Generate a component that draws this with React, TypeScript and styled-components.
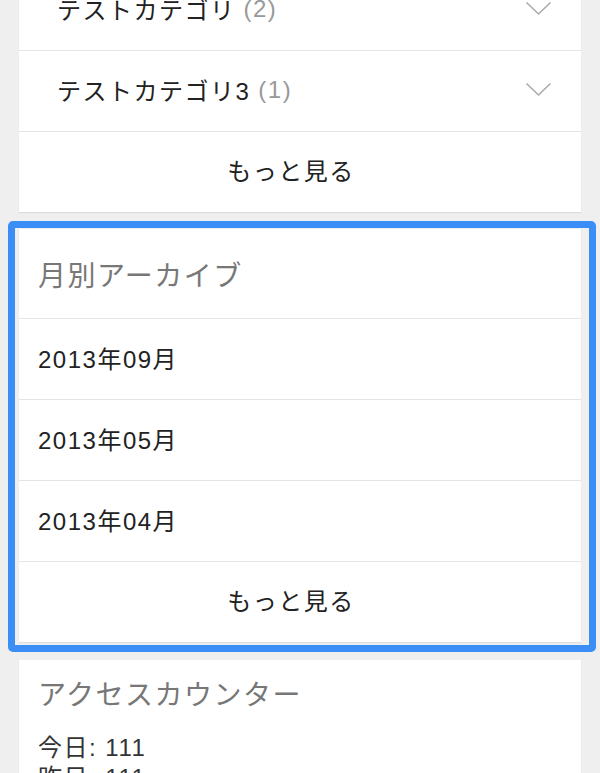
import React from "react";
import styled, { createGlobalStyle } from "styled-components";

const GlobalStyle = createGlobalStyle`
  html, body {
    margin: 0;
    overflow: hidden;
    background: #efefef;
    font-family: "Liberation Sans", "Noto Sans CJK JP", sans-serif;
  }
`;

const Page = styled.div`
  display: flex;
  flex-direction: column;
  padding: 0 19px;
  margin-top: -120px;
`;

const Card = styled.section`
  background: #fff;
  box-shadow: 0 1px 1px rgba(0, 0, 0, 0.08);
`;

const Highlight = styled.div`
  margin: 9px -15px 8px -11px;
  padding: 1px 8px 3px 4px;
  border: 7px solid #3a8ef6;
  border-radius: 5px;
`;

const CardTitle = styled.h2<{ $divided?: boolean }>`
  margin: 0;
  padding: ${(p) => (p.$divided ? "31px 19px 24px" : "19px 19px 20px")};
  font-size: 28px;
  line-height: 34px;
  font-weight: normal;
  letter-spacing: 1.5px;
  color: #777;
`;

const Row = styled.a<{ $indent?: boolean }>`
  display: flex;
  align-items: center;
  box-sizing: border-box;
  height: 81px;
  border-top: 1px solid #e4e4e4;
  padding: 0 29px 3px ${(p) => (p.$indent ? "38px" : "19px")};
  font-size: 24px;
  letter-spacing: 1.5px;
  color: #222;
  text-decoration: none;
`;

const MoreRow = styled(Row)`
  justify-content: center;
  padding: 0 18px 5px 0;
`;

const Count = styled.span`
  margin-left: 8px;
  color: #999;
`;

const Chevron = styled.svg`
  margin-left: auto;
  flex: none;
`;

const Counter = styled.div`
  padding: 0 19px 20px;
  font-size: 24px;
  line-height: 30px;
  letter-spacing: 1.5px;
  color: #333;
`;

const categories = [
  { name: "テストカテゴリ", count: 2 },
  { name: "テストカテゴリ3", count: 1 },
];

const months = ["2013年09月", "2013年05月", "2013年04月"];

function Down() {
  return (
    <Chevron width="27" height="15" viewBox="0 0 27 15">
      <polyline
        points="1.5,1.5 13.5,13 25.5,1.5"
        fill="none"
        stroke="#ababab"
        strokeWidth="1.6"
      />
    </Chevron>
  );
}

export default function App() {
  return (
    <>
      <GlobalStyle />
      <Page>
        <Card>
          <CardTitle $divided>カテゴリー</CardTitle>
          {categories.map((c) => (
            <Row key={c.name} $indent>
              {c.name}
              <Count>({c.count})</Count>
              <Down />
            </Row>
          ))}
          <MoreRow>もっと見る</MoreRow>
        </Card>
        <Highlight>
          <Card>
            <CardTitle $divided>月別アーカイブ</CardTitle>
            {months.map((m) => (
              <Row key={m}>{m}</Row>
            ))}
            <MoreRow>もっと見る</MoreRow>
          </Card>
        </Highlight>
        <Card>
          <CardTitle>アクセスカウンター</CardTitle>
          <Counter>
            <div>今日: 111</div>
            <div>昨日: 111</div>
            <div>合計: 12345</div>
          </Counter>
        </Card>
      </Page>
    </>
  );
}
